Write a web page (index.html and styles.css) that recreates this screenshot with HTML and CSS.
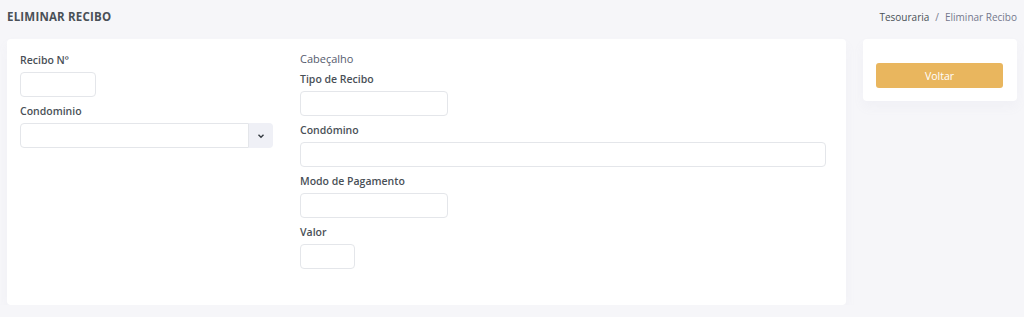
FILE: index.html
```html
<!DOCTYPE html>
<html lang="pt">
<head>
    <meta charset="UTF-8">
    <meta name="viewport" content="width=device-width, initial-scale=1.0">
    <title>Eliminar Recibo</title>
    <link rel="stylesheet" href="styles.css">
</head>
<body>
    <div class="page-title">
        <h4>Eliminar Recibo</h4>
        <ol class="breadcrumb">
            <li>Tesouraria</li>
            <li class="sep">/</li>
            <li class="active">Eliminar Recibo</li>
        </ol>
    </div>

    <div class="layout">
        <div class="card main-card">
            <div class="form-grid">
                <div class="col">
                    <div class="group">
                        <label>Recibo Nº</label>
                        <input type="text" class="input w-76">
                    </div>
                    <div class="group">
                        <label>Condominio</label>
                        <div class="input-group">
                            <input type="text" class="input w-229">
                            <span class="append">
                                <svg width="8" height="6" viewBox="0 0 8 6"><path d="M1.5 1.8 L4 4.2 L6.5 1.8" fill="none" stroke="#343a40" stroke-width="1.4"/></svg>
                            </span>
                        </div>
                    </div>
                </div>
                <div class="col">
                    <p class="section">Cabeçalho</p>
                    <div class="group">
                        <label>Tipo de Recibo</label>
                        <input type="text" class="input w-148">
                    </div>
                    <div class="group">
                        <label>Condómino</label>
                        <input type="text" class="input w-full">
                    </div>
                    <div class="group">
                        <label>Modo de Pagamento</label>
                        <input type="text" class="input w-148">
                    </div>
                    <div class="group">
                        <label>Valor</label>
                        <input type="text" class="input w-55">
                    </div>
                </div>
            </div>
        </div>

        <div class="card side-card">
            <button class="btn-warning">Voltar</button>
        </div>
    </div>
</body>
</html>
```

FILE: styles.css
```css
body {
    margin: 0;
    background: #f6f6f9;
    font-family: "Open Sans", "Noto Sans", sans-serif;
    font-size: 11px;
    color: #495057;
}

.page-title {
    display: flex;
    justify-content: space-between;
    align-items: center;
    height: 33px;
    padding: 0 7px;
}

.page-title h4 {
    margin: 0;
    font-size: 11.5px;
    font-weight: 700;
    text-transform: uppercase;
    color: #495057;
    letter-spacing: 0.2px;
}

.breadcrumb {
    display: flex;
    gap: 6px;
    list-style: none;
    margin: 0;
    padding: 0;
    font-size: 10px;
    color: #495057;
}

.breadcrumb .sep,
.breadcrumb .active {
    color: #74788d;
}

.layout {
    display: flex;
    gap: 17px;
    align-items: flex-start;
    padding: 6px 7px 0;
}

.card {
    background: #fff;
    border-radius: 4px;
    box-shadow: 0 6px 12px rgba(160, 160, 190, 0.06);
}

.main-card {
    width: 839px;
    height: 266px;
    box-sizing: border-box;
    padding: 14px 20px 0 13px;
}

.form-grid {
    display: grid;
    grid-template-columns: 253px 1fr;
    gap: 27px;
}

.section {
    margin: -1px 0 6px;
    line-height: 14px;
    color: #555b6d;
}

.group {
    margin-bottom: 7px;
}

label {
    display: block;
    line-height: 14px;
    margin-bottom: 5px;
    font-weight: 600;
    font-size: 10.5px;
    color: #495057;
}

.input {
    display: block;
    height: 25px;
    box-sizing: border-box;
    border: 1px solid #e4e6ea;
    border-radius: 4px;
    padding: 0 8px;
    font: inherit;
    background: #fff;
}

.w-76 { width: 76px; }
.w-229 { width: 229px; }
.w-148 { width: 148px; }
.w-55 { width: 55px; }
.w-full { width: 100%; }

.input-group {
    display: flex;
}

.input-group .input {
    border-radius: 4px 0 0 4px;
}

.append {
    display: flex;
    align-items: center;
    justify-content: center;
    width: 24px;
    height: 25px;
    background: #eff0f6;
    border-radius: 0 4px 4px 0;
}

.side-card {
    width: 154px;
    box-sizing: border-box;
    padding: 24px 14px 13px 13px;
}

.btn-warning {
    display: block;
    width: 100%;
    height: 25px;
    border: none;
    border-radius: 3px;
    background: #e9b65e;
    color: #fff;
    font: inherit;
    font-size: 10.5px;
}
```
